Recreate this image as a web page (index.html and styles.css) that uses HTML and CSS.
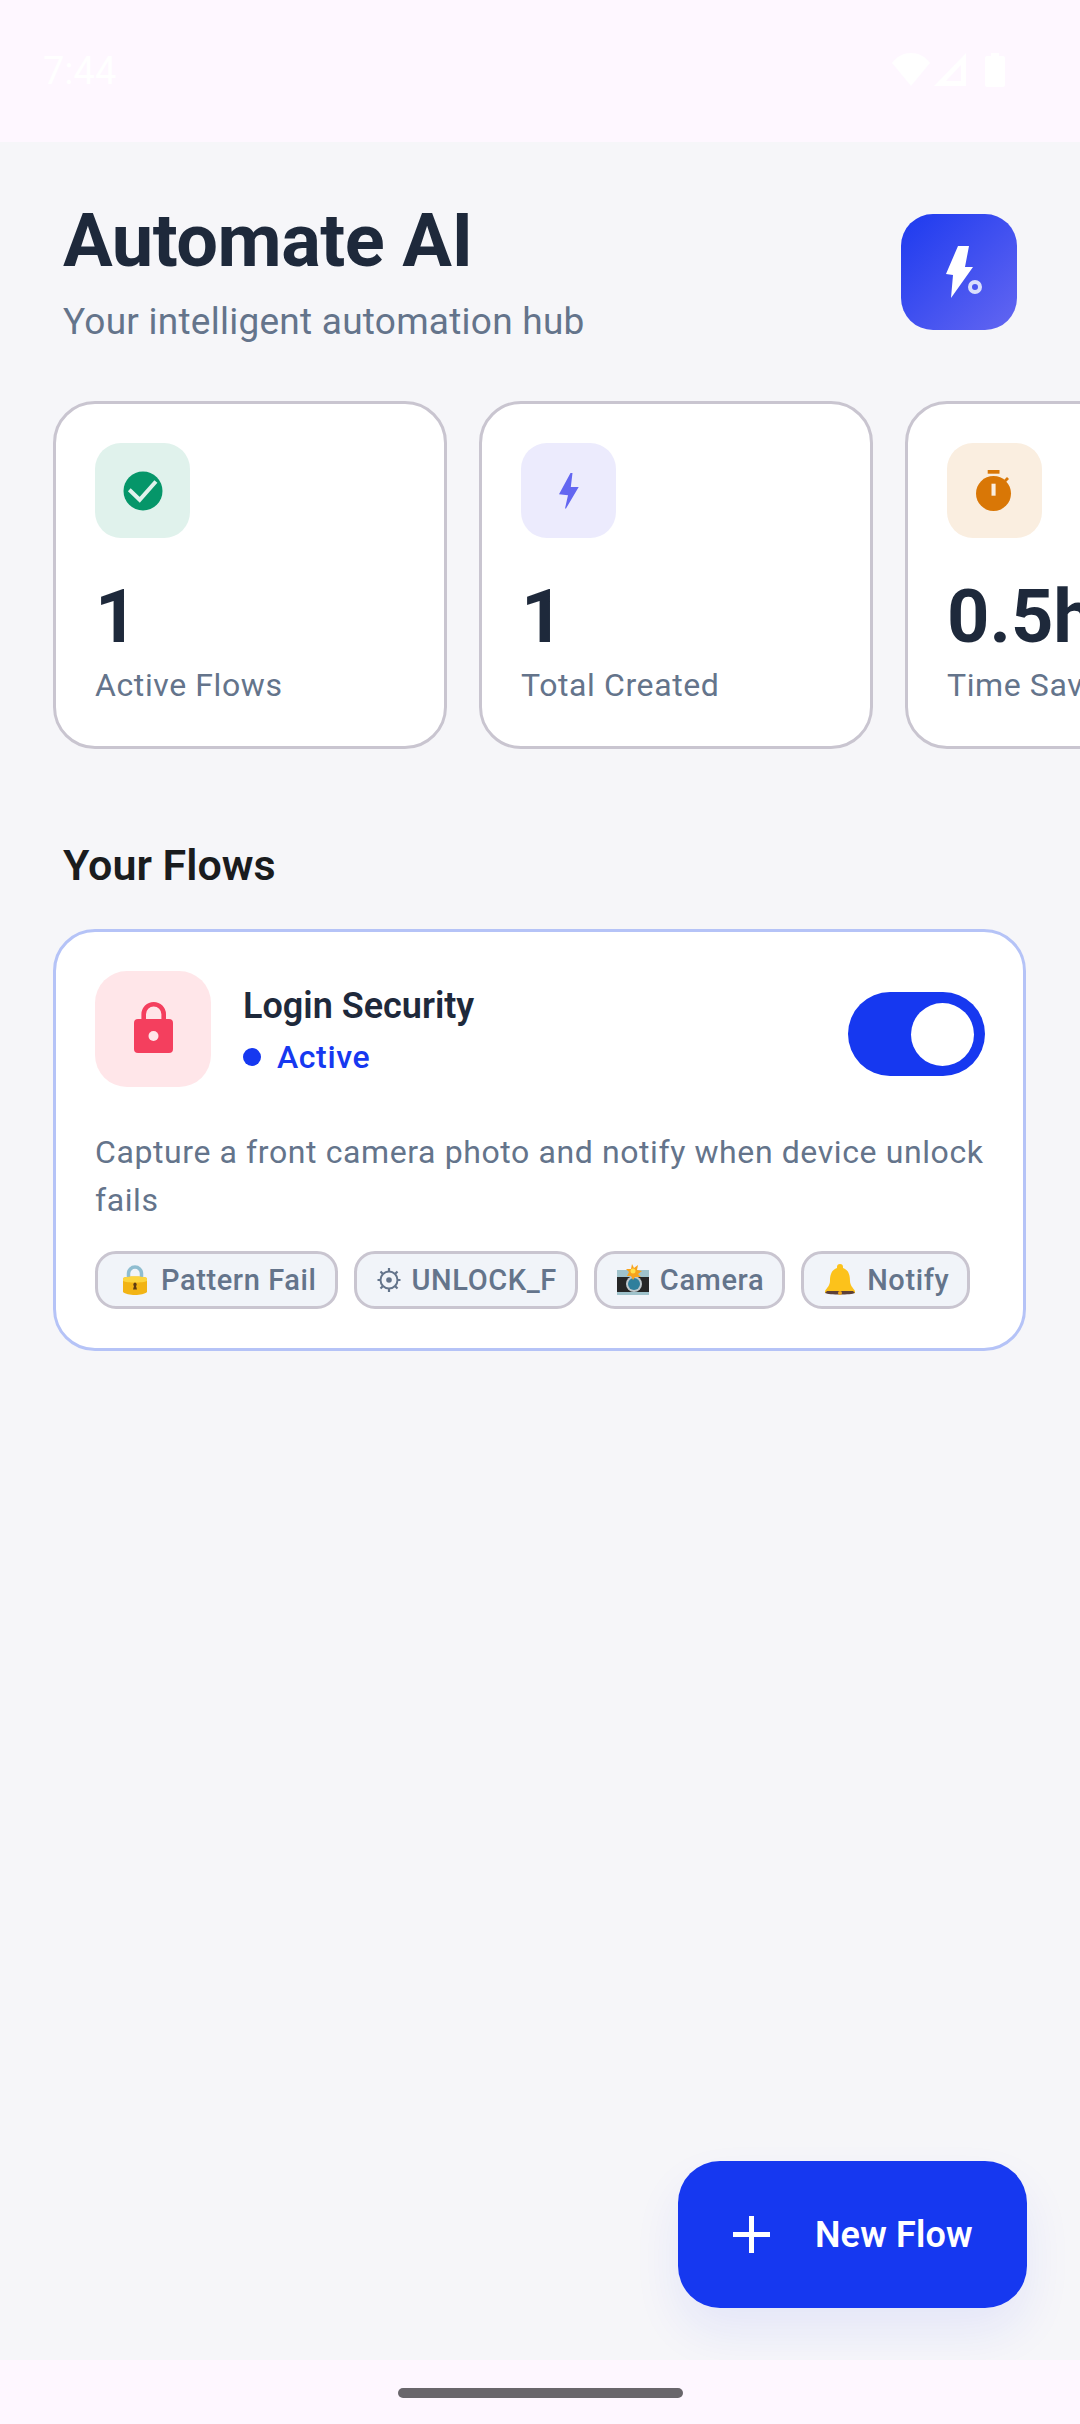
FILE: index.html
```html
<!DOCTYPE html>
<html lang="en">
<head>
    <meta charset="UTF-8">
    <meta name="viewport" content="width=device-width, initial-scale=1.0">
    <title>Automate AI</title>
    <link rel="stylesheet" href="styles.css">
</head>
<body>
    <div class="screen">
        <!-- Status bar -->
        <div class="status-bar">
            <span class="clock">7:44</span>
            <div class="status-icons">
                <svg class="ic-wifi" viewBox="0 0 38 33"><path d="M0 10C5 3 12 0 19 0s14 3 19 10L19 33z" fill="#fff"/></svg>
                <svg class="ic-signal" viewBox="0 0 32 33"><path d="M32 0v33H0zM27 12L12 28h15z" fill="#fff" fill-rule="evenodd"/></svg>
                <svg class="ic-battery" viewBox="0 0 20 34"><path d="M6 0h8v3h4a2 2 0 0 1 2 2v27a2 2 0 0 1-2 2H2a2 2 0 0 1-2-2V5a2 2 0 0 1 2-2h4z" fill="#fff"/></svg>
            </div>
        </div>

        <main class="content">
            <header class="app-header">
                <div>
                    <h1>Automate AI</h1>
                    <p class="subtitle">Your intelligent automation hub</p>
                </div>
                <div class="logo">
                    <svg viewBox="-1 2 60 70" class="logo-icon">
                        <path d="M28 11h11l-4 21h8L21 63l2-23-7-1z" fill="#fff"/>
                        <circle cx="45" cy="52" r="5" fill="none" stroke="#d9defc" stroke-width="4"/>
                    </svg>
                </div>
            </header>

            <!-- Stats -->
            <div class="stats">
                <div class="stat-card">
                    <div class="stat-icon green">
                        <svg class="ic-check" viewBox="0 0 40 40"><circle cx="20" cy="20" r="19.500" fill="#059669"/><path d="M6.300 18.800l10.400 10L32.900 10.500" fill="none" stroke="#e0f2ec" stroke-width="4"/></svg>
                    </div>
                    <div class="stat-value">1</div>
                    <div class="stat-label">Active Flows</div>
                </div>
                <div class="stat-card">
                    <div class="stat-icon indigo">
                        <svg class="ic-bolt" viewBox="0 0 20 36"><path d="M11.500 0h2l-1.700 14h7.900L7 35.600H6l3-13.300-9-1z" fill="#6366f1"/></svg>
                    </div>
                    <div class="stat-value">1</div>
                    <div class="stat-label">Total Created</div>
                </div>
                <div class="stat-card">
                    <div class="stat-icon orange">
                        <svg class="ic-timer" viewBox="0 0 38 41"><path d="M11.700 0h11.800v3.700H11.700z" fill="#d97706"/><circle cx="17.500" cy="23.500" r="17.500" fill="#d97706"/><path d="M28 10l3-3 2 2-3 3z" fill="#d97706"/><path d="M15.500 13.700h4.100v12h-4.100z" fill="#faeee0"/></svg>
                    </div>
                    <div class="stat-value">0.5h</div>
                    <div class="stat-label">Time Saved</div>
                </div>
            </div>

            <h2 class="section-title">Your Flows</h2>

            <div class="flow-card">
                <div class="flow-top">
                    <div class="flow-icon">
                        <svg viewBox="0 0 39 51"><path d="M9.700 18v-5.700a10 10 0 0 1 20 0V18" fill="none" stroke="#f43f5e" stroke-width="4.600"/><rect y="17" width="39" height="34" rx="4" fill="#f43f5e"/><circle cx="19.500" cy="34" r="5" fill="#ffe6e9"/></svg>
                    </div>
                    <div class="flow-info">
                        <div class="flow-name">Login Security</div>
                        <div class="flow-status"><span class="dot"></span>Active</div>
                    </div>
                    <div class="toggle"><span class="knob"></span></div>
                </div>
                <p class="flow-desc">Capture a front camera photo and notify when device unlock fails</p>
                <div class="tags">
                    <span class="tag">
                        <svg class="emoji lock" viewBox="0 0 24 30"><path d="M5.500 14V8.500a6.500 6.500 0 0 1 13 0V14" fill="none" stroke="#8fbdd0" stroke-width="3.500"/><path d="M0 13c4-2 20-2 24 0v14c-4 4-20 4-24 0z" fill="#f2b415"/><path d="M0 13c4-2 20-2 24 0v3c-4 2-20 2-24 0z" fill="#fcd53f"/><path d="M12 17.500a2 2 0 0 1 1 3.500l1 3.500h-4l1-3.500a2 2 0 0 1 1-3.500z" fill="#5d3a12"/></svg>
                        Pattern Fail
                    </span>
                    <span class="tag">
                        <svg class="emoji gear" viewBox="0 0 24 26"><circle cx="12" cy="13" r="8.500" fill="none" stroke="#64748b" stroke-width="2"/><circle cx="12" cy="13" r="2.800" fill="#64748b"/><path d="M12 1v3.500M12 21.500V25M0.500 13H3.500M20.500 13h3M3.500 4.500L6 7M18 19l2.500 2.500M20.500 4.500L18 7M6 19l-2.500 2.500" stroke="#64748b" stroke-width="2.200"/></svg>
                        UNLOCK_F
                    </span>
                    <span class="tag">
                        <svg class="emoji wide" viewBox="0 0 32 32"><path d="M0 8h32v22H0z" fill="#262626"/><path d="M0 6h32v7H0zM0 28h32v3H0z" fill="#9fc2cb"/><circle cx="17" cy="20" r="8" fill="#bfc7cb"/><circle cx="17" cy="20" r="6" fill="#2f7f9c"/><path d="M15 0l2 4 4-3-1 5 5 1-4 3 3 3-6 0-2 3-2-4-4 0 2-4-3-3 5 0z" fill="#f8a31c"/><circle cx="16" cy="7" r="2.500" fill="#ffe14d"/></svg>
                        Camera
                    </span>
                    <span class="tag">
                        <svg class="emoji wide" viewBox="0 0 32 32"><path d="M16 0a3 3 0 0 1 3 3v1c6 2 7 8 7 13 0 4 3 7 5 10v2H1v-2c2-3 5-6 5-10 0-5 1-11 7-13V3a3 3 0 0 1 3-3z" fill="#fcc21b"/><path d="M3 27h26l2 2c-4 2-26 2-30 0z" fill="#5d4037"/><circle cx="16" cy="29" r="2" fill="#f3a81c"/></svg>
                        Notify
                    </span>
                </div>
            </div>
        </main>

        <button class="fab">
            <svg viewBox="0 0 37 37"><path d="M16 0h5v16h16v5H21v16h-5V21H0v-5h16z" fill="#fff"/></svg>
            <span>New Flow</span>
        </button>

        <div class="nav-bar"><span class="handle"></span></div>
    </div>
</body>
</html>
```

FILE: styles.css
```css
* {
    box-sizing: border-box;
}
html, body {
    margin: 0;
    padding: 0;
}
body {
    font-family: Roboto, "Noto Sans", sans-serif;
    background-color: #f6f6f9;
}
.screen {
    position: relative;
    width: 1080px;
    height: 2424px;
    display: flex;
    flex-direction: column;
    overflow: hidden;
}
.status-bar {
    height: 142px;
    padding: 53px 75px 0 43px;
    display: flex;
    justify-content: space-between;
    align-items: flex-start;
    background-color: #fef7ff;
}
.clock {
    color: #fff;
    font-size: 38px;
    line-height: 36px;
}
.status-icons {
    display: flex;
    gap: 4px;
}
.ic-wifi {
    width: 38px;
    height: 33px;
}
.ic-signal {
    width: 32px;
    height: 33px;
    margin-right: 15px;
}
.ic-battery {
    width: 20px;
    height: 34px;
}
.content {
    flex: 1;
    min-height: 0;
    padding: 0 53px;
}
.app-header {
    display: flex;
    justify-content: space-between;
    padding: 55px 10px 0 10px;
    height: 259px;
}
h1 {
    margin: 0;
    font-size: 74px;
    line-height: 88px;
    font-weight: 700;
    color: #1e293b;
    letter-spacing: -0.500px;
}
.subtitle {
    margin: 15px 0 0;
    font-size: 37px;
    line-height: 44px;
    letter-spacing: 0.250px;
    color: #64748b;
}
.logo {
    width: 116px;
    height: 116px;
    margin-top: 17px;
    border-radius: 32px;
    background: linear-gradient(135deg, #1d3aef, #6366f1);
    display: flex;
    align-items: center;
    justify-content: center;
}
.logo-icon {
    width: 60px;
    height: 70px;
}
.stats {
    display: flex;
    gap: 32px;
    margin-right: -53px;
    overflow: hidden;
}
.stat-card {
    flex: 0 0 394px;
    height: 348px;
    padding: 39px 39px 0;
    background-color: #fff;
    border: 3px solid #c9c5d0;
    border-radius: 42px;
}
.stat-icon {
    width: 95px;
    height: 95px;
    border-radius: 26px;
    display: flex;
    align-items: center;
    justify-content: center;
}
.ic-check {
    width: 40px;
    height: 40px;
}
.ic-bolt {
    width: 20px;
    height: 36px;
}
.ic-timer {
    width: 38px;
    height: 41px;
}
.stat-icon.green {
    background-color: #e0f2ec;
}
.stat-icon.indigo {
    background-color: #ecebfd;
}
.stat-icon.orange {
    background-color: #faeee0;
}
.stat-value {
    margin-top: 37px;
    font-size: 74px;
    line-height: 84px;
    font-weight: 700;
    color: #1e293b;
}
.stat-label {
    margin-top: 6px;
    font-size: 32px;
    line-height: 40px;
    letter-spacing: 0.600px;
    color: #64748b;
    white-space: nowrap;
}
.section-title {
    margin: 92px 0 0 10px;
    font-size: 43px;
    line-height: 48px;
    font-weight: 600;
    color: #1a1c1e;
}
.flow-card {
    margin-top: 40px;
    width: 973px;
    height: 422px;
    padding: 39px 39px 0;
    background-color: #fff;
    border: 3px solid #b5c3f7;
    border-radius: 42px;
}
.flow-top {
    display: flex;
    align-items: center;
}
.flow-icon {
    width: 116px;
    height: 116px;
    border-radius: 32px;
    background-color: #ffe6e9;
    display: flex;
    align-items: center;
    justify-content: center;
}
.flow-icon svg {
    width: 39px;
    height: 51px;
    margin-bottom: 3px;
}
.flow-info {
    flex: 1;
    margin-left: 32px;
    padding-top: 3px;
}
.flow-name {
    font-size: 36px;
    line-height: 44px;
    font-weight: 600;
    color: #1e293b;
}
.flow-status {
    margin-top: 9px;
    display: flex;
    align-items: center;
    font-size: 32px;
    line-height: 40px;
    font-weight: 500;
    letter-spacing: 0.600px;
    color: #1638f0;
}
.dot {
    width: 18px;
    height: 18px;
    margin-right: 16px;
    border-radius: 50%;
    background-color: #1638f0;
}
.toggle {
    position: relative;
    width: 137px;
    height: 84px;
    margin: 10px -1px 0 0;
    border-radius: 42px;
    background-color: #1638f0;
}
.knob {
    position: absolute;
    top: 11px;
    right: 11px;
    width: 63px;
    height: 63px;
    border-radius: 50%;
    background-color: #fff;
}
.flow-desc {
    margin: 41px 0 0;
    font-size: 32px;
    line-height: 48px;
    letter-spacing: 0.600px;
    color: #64748b;
}
.tags {
    display: flex;
    gap: 16px;
    margin-top: 27px;
}
.tag {
    height: 58px;
    padding: 0 18px 0 20px;
    display: flex;
    align-items: center;
    gap: 11px;
    background-color: #f1f4f9;
    border: 3px solid #c9c5d0;
    border-radius: 21px;
    font-size: 29px;
    font-weight: 500;
    letter-spacing: 0.600px;
    color: #64748b;
    white-space: nowrap;
}
.emoji {
    width: 32px;
    height: 32px;
}
.emoji.lock {
    width: 24px;
    height: 30px;
    margin: 0 3px 0 5px;
}
.emoji.gear {
    width: 24px;
    height: 26px;
}
.fab {
    position: absolute;
    left: 678px;
    top: 2161px;
    width: 349px;
    height: 147px;
    padding: 0 0 0 55px;
    display: flex;
    align-items: center;
    gap: 45px;
    border: none;
    border-radius: 42px;
    background-color: #1638f0;
    box-shadow: 0 24px 48px rgba(23, 57, 238, 0.08);
    color: #fff;
    font-family: inherit;
    font-size: 36px;
    font-weight: 600;
    letter-spacing: 0.150px;
}
.fab svg {
    width: 37px;
    height: 37px;
}
.nav-bar {
    position: relative;
    height: 64px;
    display: flex;
    justify-content: center;
    padding-top: 28px;
    background-color: #fef7ff;
}
.handle {
    width: 285px;
    height: 10px;
    border-radius: 5px;
    background-color: #69666b;
}
```
